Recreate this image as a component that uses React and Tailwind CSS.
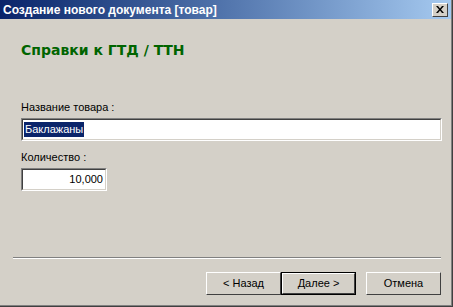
export default function App() {
  const font = { fontFamily: "'Liberation Sans', Arial, sans-serif" };
  return (
    <div className="w-[453px] h-[307px] bg-[#D4D0C8] border-r border-b border-[#404040] overflow-hidden" style={font}>
      <div className="h-full border-r border-b border-[#808080] flex flex-col">
        <div className="h-[19px] flex items-center justify-between pl-[3px] pr-[3px] bg-gradient-to-r from-[#0A246A] to-[#A6CAF0]">
          <span className="text-white font-bold text-[12px] leading-[14px] whitespace-nowrap">Создание нового документа [товар]</span>
          <div className="w-[16px] h-[14px] bg-[#D4D0C8] border-t border-l border-white border-r border-b border-r-[#404040] border-b-[#404040] flex items-center justify-center">
            <svg width="8" height="7" viewBox="0 0 8 7">
              <path d="M0 0h2l2 2.5L6 0h2L5 3.5 8 7H6L4 4.5 2 7H0l3-3.5z" fill="#000" />
            </svg>
          </div>
        </div>
        <div className="flex flex-col pl-[21px] pr-[10px]">
          <div className="mt-[23px] text-[#006400] font-bold text-[14px] leading-[17px] font-['DejaVu_Sans']">Справки к ГТД / ТТН</div>
          <div className="mt-[42px] text-[11px] leading-[13px] text-black">Название товара :</div>
          <div className="mt-[4px] w-[421px] h-[23px] border-t border-l border-[#808080] border-b border-r border-b-white border-r-white">
            <div className="h-full border-t border-l border-[#404040] border-b border-r border-b-[#D4D0C8] border-r-[#D4D0C8] bg-white flex items-center pl-[1px]">
              <span className="bg-[#0A246A] text-white text-[11px] leading-[15px] px-[1px]">Баклажаны</span>
            </div>
          </div>
          <div className="mt-[10px] text-[11px] leading-[13px] text-black">Количество :</div>
          <div className="mt-[4px] w-[86px] h-[23px] border-t border-l border-[#808080] border-b border-r border-b-white border-r-white">
            <div className="h-full border-t border-l border-[#404040] border-b border-r border-b-[#D4D0C8] border-r-[#D4D0C8] bg-white flex items-center justify-end pr-[2px]">
              <span className="text-black text-[11px] leading-[15px]">10,000</span>
            </div>
          </div>
        </div>
        <div className="mt-[66px] ml-[13px] w-[428px] border-t border-[#808080] border-b border-b-white"></div>
        <div className="mt-[13px] flex pl-[206px]">
          <button className="w-[75px] h-[23px] bg-[#D4D0C8] border-t border-l border-white border-b border-r border-b-[#404040] border-r-[#404040] text-[11px] text-black">
            &lt; Назад
          </button>
          <button className="w-[75px] h-[23px] border border-black">
            <div className="h-full bg-[#D4D0C8] border-t border-l border-white border-b border-r border-b-[#404040] border-r-[#404040] text-[11px] text-black flex items-center justify-center">
              Далее &gt;
            </div>
          </button>
          <button className="ml-[10px] w-[75px] h-[23px] bg-[#D4D0C8] border-t border-l border-white border-b border-r border-b-[#404040] border-r-[#404040] text-[11px] text-black">
            Отмена
          </button>
        </div>
      </div>
    </div>
  );
}
